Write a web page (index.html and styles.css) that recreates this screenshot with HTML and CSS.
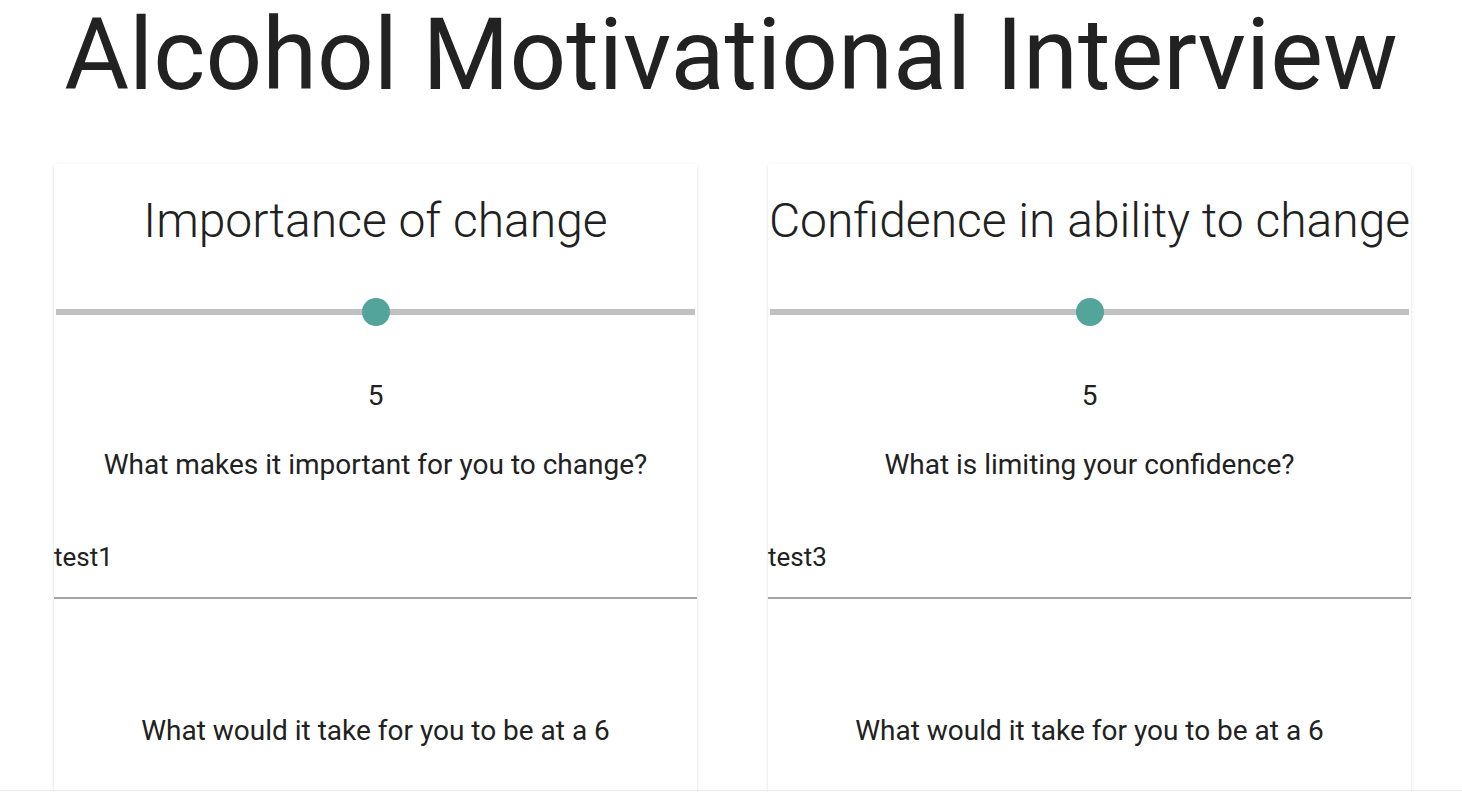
FILE: index.html
```html
<!DOCTYPE html>
<html lang="en">
<head>
<meta charset="utf-8">
<title>Alcohol Motivational Interview</title>
<link rel="stylesheet" href="styles.css">
</head>
<body>
<h1 class="page-title">Alcohol Motivational Interview</h1>
<main class="cards">
  <section class="card">
    <h2 class="card-title">Importance of change</h2>
    <div class="slider">
      <div class="track"></div>
      <div class="thumb" style="left: 50%"></div>
    </div>
    <div class="value">5</div>
    <p class="question">What makes it important for you to change?</p>
    <div class="answer">test1</div>
    <p class="question question-next">What would it take for you to be at a 6</p>
  </section>
  <section class="card">
    <h2 class="card-title">Confidence in ability to change</h2>
    <div class="slider">
      <div class="track"></div>
      <div class="thumb" style="left: 50%"></div>
    </div>
    <div class="value">5</div>
    <p class="question">What is limiting your confidence?</p>
    <div class="answer">test3</div>
    <p class="question question-next">What would it take for you to be at a 6</p>
  </section>
</main>
<div class="edge"></div>
</body>
</html>
```
FILE: styles.css
```css
html, body {
  margin: 0;
  padding: 0;
  background: #fff;
}
body {
  font-family: Roboto, "Liberation Sans", Arial, sans-serif;
  color: #212121;
  overflow: hidden;
  height: 792px;
}
.page-title {
  margin: 1px 0 0;
  font-size: 99.5px;
  font-weight: 400;
  line-height: 1.1;
  text-align: center;
  color: #222;
  white-space: nowrap;
}
.cards {
  display: flex;
  gap: 71px;
  padding: 0 51px 0 54px;
  margin-top: 53.5px;
}
.card {
  flex: 0 0 643px;
  background: #fff;
  border-radius: 2px;
  box-shadow: 0 2px 2px 0 rgba(0,0,0,0.10), 0 1px 5px 0 rgba(0,0,0,0.08), 0 3px 1px -2px rgba(0,0,0,0.10);
  display: flex;
  flex-direction: column;
  height: 720px;
}
.card-title {
  margin: 28px 0 0;
  font-size: 48px;
  font-weight: 300;
  line-height: 1.2;
  text-align: center;
  white-space: nowrap;
  color: #212121;
}
.slider {
  position: relative;
  height: 28px;
  margin: 48px 2px 0;
}
.track {
  position: absolute;
  left: 0;
  right: 0;
  top: 11px;
  height: 6px;
  background: #c2c1c2;
}
.thumb {
  position: absolute;
  top: 0;
  width: 28px;
  height: 28px;
  margin-left: -14px;
  border-radius: 50%;
  background: #53a49b;
}
.value {
  margin-top: 53px;
  font-size: 28px;
  line-height: 1.2;
  text-align: center;
}
.question {
  margin: 36px 0 0;
  font-size: 28px;
  line-height: 1.2;
  text-align: center;
}
.answer {
  margin-top: 60px;
  font-size: 26px;
  line-height: 1.2;
  padding-bottom: 24px;
  border-bottom: 2px solid #a3a3a3;
}
.question-next {
  margin-top: 115px;
}
.edge {
  position: fixed;
  left: 0;
  right: 0;
  bottom: 1px;
  height: 1px;
  background: #ececec;
}
```
